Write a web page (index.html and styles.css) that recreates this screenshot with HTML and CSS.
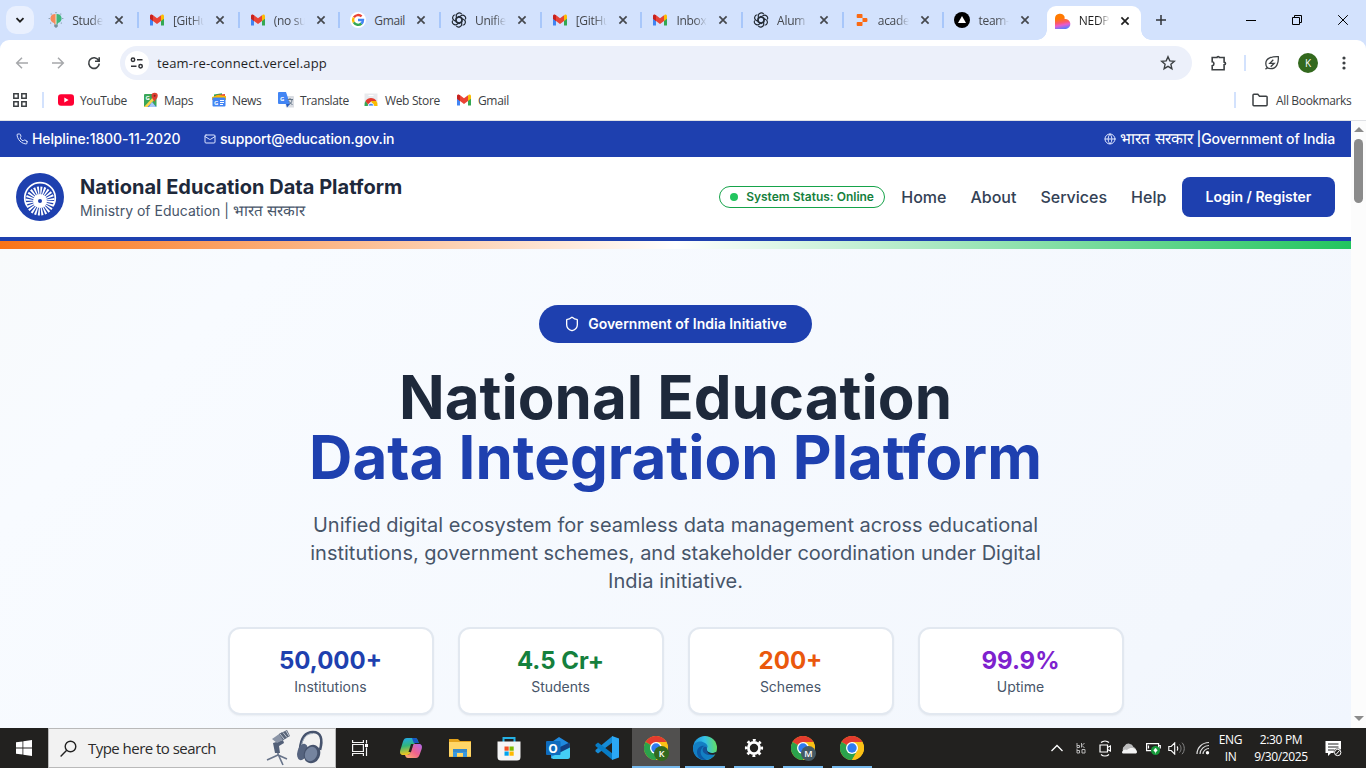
FILE: index.html
```html
<!DOCTYPE html>
<html lang="en">
<head>
<meta charset="utf-8">
<title>NEDP</title>
<link rel="stylesheet" href="styles.css">
</head>
<body>
<svg class="defs" width="0" height="0" aria-hidden="true">
  <defs>
    <linearGradient id="heartg" x1="0.3" y1="0" x2="0.5" y2="1"><stop offset="0.3" stop-color="#ff7a00"/><stop offset="0.58" stop-color="#fb5a6c"/><stop offset="0.75" stop-color="#e75bd0"/><stop offset="1" stop-color="#5b7cff"/></linearGradient>
    <linearGradient id="edgeg" x1="0" y1="0.3" x2="1" y2="0.2"><stop offset="0" stop-color="#1b8fd8"/><stop offset="0.5" stop-color="#35c1e8"/><stop offset="1" stop-color="#66df5b"/></linearGradient>
    <linearGradient id="cop1" x1="0" y1="0" x2="0.2" y2="1"><stop offset="0" stop-color="#23a8f2"/><stop offset="0.5" stop-color="#31b67a"/><stop offset="1" stop-color="#f4c51c"/></linearGradient>
    <linearGradient id="cop2" x1="1" y1="0" x2="0" y2="1"><stop offset="0" stop-color="#b06bf0"/><stop offset="0.5" stop-color="#f0628c"/><stop offset="1" stop-color="#ffb36b"/></linearGradient>
  </defs>
  <symbol id="x" viewBox="0 0 10 10"><path d="M1.400 1.400l7.200 7.200M8.600 1.400L1.400 8.600" fill="none" stroke="currentColor" stroke-width="1.700"/></symbol>
  <symbol id="gm" viewBox="0 0 16 16"><path d="M1 4v9.500h3V7z" fill="#4285f4"/><path d="M15 4v9.500h-3V7z" fill="#34a853"/><path d="M12 4.500V9l3-2.300V4.200C15 2.300 13.200 2.200 12.200 3z" fill="#fbbc04"/><path d="M1 4.200C1 2.300 2.800 2.200 3.800 3L8 6.200 12 3.200V9l-4 3.100L4 9v.1L1 6.800z" fill="#ea4335"/><path d="M1 4.200C1 2.500 2.800 2.200 4 3.200V9L1 6.800z" fill="#c5221f"/></symbol>
  <symbol id="gpt" viewBox="0 0 16 16"><g fill="none" stroke="#202831" stroke-width="1.150"><path id="petal" d="M5.300 9.500V4.200a3 3 0 0 1 5.500-1.900M8 4.300l-2.700 1.600"/><use href="#petal" transform="rotate(60 8 8)"/><use href="#petal" transform="rotate(120 8 8)"/><use href="#petal" transform="rotate(180 8 8)"/><use href="#petal" transform="rotate(240 8 8)"/><use href="#petal" transform="rotate(300 8 8)"/></g></symbol>
  <symbol id="goog" viewBox="0 0 16 16"><circle cx="8" cy="8" r="8" fill="#fff"/><g fill="none" stroke-width="2.400"><path d="M3.900 5.400a5 5 0 0 1 7.700-1" stroke="#ea4335"/><path d="M3.700 10.400a5 5 0 0 1 0-4.800" stroke="#fbbc05"/><path d="M11.500 11.500a5 5 0 0 1-7.700-1.100" stroke="#34a853"/><path d="M8 8h5a5 5 0 0 1-1.600 3.700" stroke="#4285f4"/></g></symbol>
  <symbol id="chrome" viewBox="0 0 24 24"><circle cx="12" cy="12" r="12" fill="#fbc116"/><path d="M12 12L1.600 6a12 12 0 0 1 20.800 0z" fill="#e33b2e"/><path d="M12 12L1.600 6A12 12 0 0 0 12 24l5.200-9z" fill="#2ba24c"/><path d="M12 6h10.400a12 12 0 0 1-10.400 18l5.200-9z" fill="#fbc116"/><circle cx="12" cy="12" r="6" fill="#fff"/><circle cx="12" cy="12" r="4.700" fill="#2f7cf0"/></symbol>
</svg>

<div class="tabstrip">
  <div class="tabsearch"><svg width="10" height="10" viewBox="0 0 10 10"><path d="M1.500 3.200L5 6.700l3.500-3.500" fill="none" stroke="#1f1f1f" stroke-width="1.800"/></svg></div>
  <div class="tab"><svg class="fav" viewBox="0 0 16 16"><path d="M8 2a4.600 4.600 0 0 0-2 9l.5 1.500H8z" fill="#f58a5b"/><path d="M8 2a4.600 4.600 0 0 1 2 9l-.5 1.500H8z" fill="#3eb67d"/><path d="M6.200 12.500h3.600v2L8 16l-1.800-1.500z" fill="#78909c"/><path d="M8 2v10" stroke="#efe6d4"/><g fill="#64808e"><circle cx="8" cy=".7" r=".6"/><circle cx="3.200" cy="2" r=".6"/><circle cx="12.800" cy="2" r=".6"/><circle cx="1.200" cy="6.500" r=".6"/><circle cx="14.800" cy="6.500" r=".6"/><circle cx="2.700" cy="11" r=".6"/><circle cx="13.300" cy="11" r=".6"/></g></svg><span>Stude</span><svg class="close"><use href="#x"/></svg></div>
  <div class="tab"><svg class="fav"><use href="#gm"/></svg><span>[GitHu</span><svg class="close"><use href="#x"/></svg></div>
  <div class="tab"><svg class="fav"><use href="#gm"/></svg><span>(no su</span><svg class="close"><use href="#x"/></svg></div>
  <div class="tab"><svg class="fav"><use href="#goog"/></svg><span class="whole">Gmail</span><svg class="close"><use href="#x"/></svg></div>
  <div class="tab"><svg class="fav"><use href="#gpt"/></svg><span>Unifie</span><svg class="close"><use href="#x"/></svg></div>
  <div class="tab"><svg class="fav"><use href="#gm"/></svg><span>[GitHu</span><svg class="close"><use href="#x"/></svg></div>
  <div class="tab"><svg class="fav"><use href="#gm"/></svg><span>Inbox</span><svg class="close"><use href="#x"/></svg></div>
  <div class="tab"><svg class="fav"><use href="#gpt"/></svg><span>Alum</span><svg class="close"><use href="#x"/></svg></div>
  <div class="tab"><svg class="fav" viewBox="0 0 16 16"><path d="M3.500 2h4c.6 0 1 .4 1 1v3h-5C3 6 2.700 5.600 2.700 5.200V3c0-.6.4-1 .8-1zM8.500 6.100h4c.5 0 .9.400.9.900v2c0 .5-.4.900-.9.900h-4zM3.500 9.900h5v3c0 .6-.4 1-1 1h-4c-.5 0-.8-.4-.8-.9v-2.200c0-.5.300-.9.800-.9z" fill="#fb6a13"/></svg><span>acade</span><svg class="close"><use href="#x"/></svg></div>
  <div class="tab last"><svg class="fav" viewBox="0 0 16 16"><circle cx="8" cy="8" r="8" fill="#000"/><path d="M8 4l4 7H4z" fill="#fff"/></svg><span>team-</span><svg class="close"><use href="#x"/></svg></div>
  <div class="tab active"><svg class="fav" viewBox="0 0 16 16"><path d="M0 5a5 5 0 0 1 9.600-1.200V6A5 5 0 1 1 11 16H0z" fill="url(#heartg)"/></svg><span>NEDP</span><svg class="close"><use href="#x"/></svg></div>
  <svg class="plus" width="12" height="12" viewBox="0 0 12 12"><path d="M6 1v10M1 6h10" stroke="#303338" stroke-width="1.500"/></svg>
  <div class="winctl">
    <svg width="10" height="10" viewBox="0 0 10 10"><path d="M0 5.500h10" stroke="#000"/></svg>
    <svg width="10" height="10" viewBox="0 0 10 10"><path d="M.5 2.500h7v7h-7zM2.500 2.500v-2h7v7h-2" fill="none" stroke="#000"/></svg>
    <svg width="10" height="10" viewBox="0 0 10 10"><path d="M.2.200l9.600 9.600M9.800.2L.2 9.800" stroke="#000"/></svg>
  </div>
</div>

<div class="chromebody">
  <div class="toolbar">
    <svg class="ti" width="16" height="16" viewBox="0 0 16 16"><path d="M14 8H3M8 2.700L2.700 8 8 13.300" fill="none" stroke="#a6a8ab" stroke-width="1.500"/></svg>
    <svg class="ti" width="16" height="16" viewBox="0 0 16 16"><path d="M2 8h11M8 2.700L13.300 8 8 13.300" fill="none" stroke="#a6a8ab" stroke-width="1.500"/></svg>
    <svg class="ti" width="16" height="16" viewBox="0 0 16 16"><path d="M12.600 5.400A5.300 5.300 0 1 0 13.300 8.700M13.200 2.200v4.100H9" fill="none" stroke="#3c4043" stroke-width="1.600"/></svg>
    <div class="omnibox">
      <div class="site"><svg width="14" height="12" viewBox="0 0 14 12"><g fill="none" stroke="#303236" stroke-width="1.500"><circle cx="3" cy="2.800" r="1.700"/><path d="M7 2.800h5.500M1 9.200h5.500"/><circle cx="10.600" cy="9.200" r="1.700"/></g></svg></div>
      <span class="url">team-re-connect.vercel.app</span>
      <svg width="16" height="16" viewBox="0 0 16 16"><path d="M8 1.800l1.800 4.100 4.500.4-3.400 3 1 4.400L8 11.400l-3.900 2.300 1-4.400-3.400-3 4.500-.4z" fill="none" stroke="#3c4043" stroke-width="1.400"/></svg>
    </div>
    <svg class="ext" width="18" height="18" viewBox="0 0 18 18"><path d="M2.200 3.500h4.800c.1-1.400 2.200-1.400 2.300 0h4.800v4.600c1.900.2 1.900 2.400 0 2.600v5H2.200v-4c2.300-.3 2.300-3.700 0-4z" fill="none" stroke="#3c4043" stroke-width="1.600"/></svg>
    <i class="vsep"></i>
    <svg class="leaf" width="16" height="16" viewBox="0 0 16 16"><path d="M14.300 1.700C8 1.500 1.800 3 1.800 8.500c0 3 2 5.200 5 5.200 5.700 0 8-5.700 7.500-12zM3.800 12l-2.300 2.300M9.300 4.800L5.800 8.300h4.400L6.700 11.800" fill="none" stroke="#3c4043" stroke-width="1.300"/></svg>
    <span class="avatar">K</span>
    <svg class="dots" width="4" height="14" viewBox="0 0 4 14"><g fill="#3c4043"><circle cx="2" cy="2" r="1.600"/><circle cx="2" cy="7" r="1.600"/><circle cx="2" cy="12" r="1.600"/></g></svg>
  </div>
  <div class="bookmarks">
    <svg class="apps" width="14" height="14" viewBox="0 0 14 14"><path d="M.8.800h4.400v4.400H.8zM8.800.8h4.400v4.400H8.800zM.8 8.800h4.400v4.400H.8zM8.800 8.800h4.400v4.400H8.800z" fill="none" stroke="#3c4043" stroke-width="1.500"/></svg>
    <i class="vsep bsep"></i>
    <div class="bm yt"><svg width="16" height="16" viewBox="0 0 16 16"><rect y="2.300" width="16" height="11.500" rx="3" fill="#f03"/><path d="M6.300 5.500v5l4.300-2.500z" fill="#fff"/></svg><span>YouTube</span></div>
    <div class="bm maps"><svg width="16" height="16" viewBox="0 0 16 16"><rect x="1" y="2" width="12.500" height="13" rx="1" fill="#3aa757"/><path d="M4 15l5-5 4.500 5z" fill="#4285f4"/><path d="M1 15L12 3l2 2L4.500 15z" fill="#fbd34b"/><path d="M6 15h7l-4-5z" fill="#aac8f7"/><text x="2.500" y="8" class="tiny">G</text><path d="M11.500 10C10.700 7.500 8.500 6.500 8.500 3.800a3 3 0 0 1 6.300 0c0 2.700-2.500 3.700-3.300 6.200z" fill="#de4032"/><circle cx="11.600" cy="3.700" r="1" fill="#7b231e"/></svg><span>Maps</span></div>
    <div class="bm news"><svg width="16" height="16" viewBox="0 0 16 16"><path d="M3 2.500l8-1.200V6H3z" fill="#34a853"/><path d="M5 3l9-1v4H5z" fill="#ea4335"/><path d="M1 5l6-2 8 1v4H1z" fill="#fbbc04"/><rect x="1.500" y="5.500" width="13" height="9" rx="1" fill="#4285f4"/><text x="3" y="12.500" class="tiny">G</text><path d="M9 8.500h4M9 10.500h4M9 12.500h3" stroke="#fff"/></svg><span>News</span></div>
    <div class="bm trans"><svg width="16" height="16" viewBox="0 0 16 16"><path d="M6 4h9a1 1 0 0 1 1 1v10.500H8z" fill="#d9dce2"/><path d="M1 0h7l4 12H1a1 1 0 0 1-1-1V1a1 1 0 0 1 1-1z" fill="#4285f4"/><path d="M8 12h4l-3 3.500z" fill="#255bbf"/><text x="2" y="8.500" class="tiny">G</text><path d="M9.500 7.500H15M12 6v1.500M14 7.500c0 3-2 4.500-3 5M10.500 9l4 4" fill="none" stroke="#667789"/></svg><span>Translate</span></div>
    <div class="bm store"><svg width="16" height="16" viewBox="0 0 16 16"><path d="M1.500 1.500h13v12.500h-13z" fill="#e8eaed"/><path d="M5.500 3h5v1h-5z" fill="#fff"/><path d="M1.500 14a6.500 6.500 0 0 1 1.300-5.200L6 13.900z" fill="#34a853"/><path d="M14.500 14a6.500 6.500 0 0 0-1.300-5.200L8 9l2.500 5z" fill="#fbbc04"/><path d="M2.500 9a6.500 6.500 0 0 1 11 0H8.500L5 12.500z" fill="#e33b2e"/><path d="M5.200 14a2.800 2.800 0 0 1 5.600 0z" fill="#4285f4" stroke="#fff" stroke-width=".8"/></svg><span>Web Store</span></div>
    <div class="bm mail"><svg width="16" height="16"><use href="#gm"/></svg><span>Gmail</span></div>
    <i class="vsep allsep"></i>
    <div class="bm all"><svg width="16" height="16" viewBox="0 0 16 16"><path d="M1 12.800V3.200c0-.6.300-.9.900-.9h3.900l1.700 1.900h6.700c.6 0 .9.300.9.900v7.700c0 .600-.3.900-.9.900H1.900c-.6 0-.9-.3-.9-.9z" fill="none" stroke="#3c4043" stroke-width="1.500"/></svg><span>All Bookmarks</span></div>
  </div>
</div>

<div class="viewport">
  <main class="page">
    <div class="topbar">
      <svg class="ic12" viewBox="0 0 24 24"><path d="M22 16.900v3a2 2 0 0 1-2.200 2 19.800 19.800 0 0 1-8.600-3.100 19.500 19.500 0 0 1-6-6A19.800 19.800 0 0 1 2.100 4.200 2 2 0 0 1 4.100 2h3a2 2 0 0 1 2 1.700c.1 1 .4 1.900.7 2.800a2 2 0 0 1-.5 2.100L8.100 9.900a16 16 0 0 0 6 6l1.300-1.300a2 2 0 0 1 2.100-.4c.9.300 1.800.6 2.800.7a2 2 0 0 1 1.700 2z"/></svg><span>Helpline:1800-11-2020</span>
      <svg class="ic12 mailic" viewBox="0 0 24 24"><rect x="2" y="4" width="20" height="16" rx="2"/><path d="M22 7l-9 5.700a2 2 0 0 1-2 0L2 7"/></svg><span>support@education.gov.in</span>
      <svg class="ic12 globe" viewBox="0 0 24 24"><circle cx="12" cy="12" r="10"/><path d="M12 2a14.500 14.500 0 0 0 0 20 14.500 14.500 0 0 0 0-20M2 12h20"/></svg><span><span class="hin1">भारत सरकार</span> |Government of India</span>
    </div>
    <header class="header">
      <svg width="48" height="48" viewBox="0 0 48 48"><circle cx="24" cy="24" r="24" fill="#1e40af"/><path d="M11 33a15.300 15.300 0 1 1 26 0" fill="none" stroke="#fff" stroke-width="1.700"/><circle cx="24" cy="28" r="10.500" fill="none" stroke="#fff" stroke-width="8" stroke-dasharray="1.600 1.149"/><circle cx="24" cy="28" r="7" fill="#fff"/><circle cx="24" cy="28" r="2" fill="#1e40af"/></svg>
      <div class="brand"><h2>National Education Data Platform</h2><p>Ministry of Education | <span class="hin2">भारत सरकार</span></p></div>
      <div class="status"><i></i>System Status: Online</div>
      <nav><a>Home</a><a>About</a><a>Services</a><a>Help</a></nav>
      <button class="login">Login / Register</button>
    </header>
    <div class="tricolor"></div>
    <section class="hero">
      <div class="badge"><svg width="16" height="16" viewBox="0 0 24 24"><path d="M20 13c0 5-3.500 7.500-7.700 9a1 1 0 0 1-.6 0C7.500 20.500 4 18 4 13V6a1 1 0 0 1 1-1c2 0 4.500-1.200 6.200-2.700a1.200 1.200 0 0 1 1.600 0C14.500 3.800 17 5 19 5a1 1 0 0 1 1 1z"/></svg><span>Government of India Initiative</span></div>
      <h1>National Education<br><span>Data Integration Platform</span></h1>
      <p class="lead">Unified digital ecosystem for seamless data management across educational institutions, government schemes, and stakeholder coordination under Digital India initiative.</p>
      <div class="stats">
        <div class="stat"><b class="blue">50,000+</b><span>Institutions</span></div>
        <div class="stat"><b class="green">4.5 Cr+</b><span>Students</span></div>
        <div class="stat"><b class="orange">200+</b><span>Schemes</span></div>
        <div class="stat"><b class="purple">99.9%</b><span>Uptime</span></div>
      </div>
    </section>
  </main>
  <div class="scroll"><i class="up"></i><i class="thumb"></i><i class="down"></i></div>
</div>

<div class="taskbar">
  <div class="start"><svg width="16" height="16" viewBox="0 0 16 16"><path d="M0 2.300L6.500 1.400v6.200H0zM7.300 1.300L16 0v7.600H7.300zM0 8.400h6.500v6.200L0 13.700zM7.300 8.400H16V16l-8.700-1.300z" fill="#fff"/></svg></div>
  <div class="search"><svg width="17" height="17" viewBox="0 0 17 17"><circle cx="10.500" cy="6.500" r="5.300" fill="none" stroke="#222" stroke-width="1.400"/><path d="M6.700 10.300L.6 16.400" stroke="#222" stroke-width="1.400"/></svg><span>Type here to search</span>
    <svg class="art" width="58" height="38" viewBox="0 0 58 38"><path d="M12 12v14M12 26L1 31M12 26l9 4M12 25l5 11" stroke="#68748a" stroke-width="1.600" fill="none"/><path d="M7 14l10-3 1 3-5 3 1 7H9z" fill="#536078"/><path d="M6 10l10-7 5 6-10 5z" fill="#8b95a7"/><path d="M13 5l8-4 3 6-7 4z" fill="#5b6679"/><path d="M14 5l4 5M17 3.500l4 5M20 2l3 5" stroke="#c4cbd5" stroke-width="1"/><path d="M34 20C35 9 39 3 47 3c8 0 10 7 7 18" fill="none" stroke="#46536d" stroke-width="2.600"/><path d="M35 18C37 8 41 4.500 47 4.500" fill="none" stroke="#9ba8b8" stroke-width="1"/><ellipse cx="36.500" cy="23" rx="5" ry="8.500" transform="rotate(18 36.500 23)" fill="#56647f"/><ellipse cx="46" cy="25" rx="8" ry="9.500" transform="rotate(25 46 25)" fill="#46536d"/><ellipse cx="45" cy="25" rx="6" ry="7.500" transform="rotate(25 45 25)" fill="#75849f"/></svg>
  </div>
  <div class="cell tv"><svg width="17" height="16" viewBox="0 0 17 16"><path d="M.6 0v2.500h10.800V0M.6 16v-2.500h10.800V16M.6 4.500h10.800v7H.6zM14.500 0v3.500M14.500 7.500V16" fill="none" stroke="#f3f3f3" stroke-width="1.200"/><rect x="13" y="4" width="3" height="3" fill="#fff"/></svg></div>
  <div class="cell"><svg width="24" height="24" viewBox="0 0 24 24"><path d="M8 2h8c2 0 2.500 1.500 3 3l.8 2h-4L12 15c-1 3-2 4-4 4H4c-3 0-3.500-2.500-2.500-5.500l2.500-8C4.800 3 6 2 8 2z" fill="url(#cop1)"/><path d="M13 2h3c2 0 2.500 1.500 3 3l.8 2h-5z" fill="#1656c5"/><path d="M17 22H9c-2 0-2.600-2-3-3h2c2 0 3-1 4-4l2.500-7H20c3 0 3.500 2.500 2.500 5.500l-2 5.500c-.8 2-1.700 3-3.500 3z" fill="url(#cop2)"/><path d="M9.500 16l2.500-8h2.500L12 16z" fill="#242321"/></svg></div>
  <div class="cell"><svg width="24" height="24" viewBox="0 0 24 24"><path d="M1 3h9l2 2h11v16H1z" fill="#e3a21a"/><path d="M1 6h22v14.500H1z" fill="#ffd667"/><path d="M5 13h14v8h-4v-4H9v4H5z" fill="#3899df"/><path d="M5 13h14v3H5z" fill="#3588c9"/></svg></div>
  <div class="cell"><svg width="24" height="25" viewBox="0 0 24 25"><path d="M6.500 6V2h11v4" fill="none" stroke="#25b1e4" stroke-width="2"/><path d="M.5 5.500h23V21a3.500 3.500 0 0 1-3.500 3.500H4A3.500 3.500 0 0 1 .5 21z" fill="#f5f5f5"/><path d="M7.500 10.500h4.200v4.200H7.500z" fill="#f25022"/><path d="M12.500 10.500h4.200v4.200h-4.200z" fill="#7fba00"/><path d="M7.500 15.500h4.200v4.200H7.500z" fill="#00a4ef"/><path d="M12.500 15.500h4.200v4.200h-4.200z" fill="#ffb900"/></svg></div>
  <div class="cell"><svg width="24" height="24" viewBox="0 0 24 24"><path d="M5 6.500L13 1l10.500 6.500V20a2.500 2.500 0 0 1-2.500 2.500H5z" fill="#1f8ae0"/><path d="M14 11l9.500-4.500v6L14 17z" fill="#123f82"/><path d="M24 11.500v9a2.500 2.500 0 0 1-2.500 2.500H7l-2-2z" fill="#44cdf4"/><rect y="5" width="14.500" height="14" rx="1" fill="#0f6cbd"/><text x="2.300" y="16.500" class="outlook">O</text></svg></div>
  <div class="cell"><svg width="24" height="24" viewBox="0 0 24 24"><path d="M17.500 6.500L3 17.500.5 15.500v-1.500L17.500 0z" fill="#168bd5"/><path d="M17.500 17.500L3 6.500.5 8.500V10l17 14z" fill="#087cc5"/><path d="M17 0l7 2.500v19L17 24z" fill="#2ba8f5"/></svg></div>
  <div class="cell sel"><svg width="24" height="24"><use href="#chrome"/></svg><em class="kb">K</em></div>
  <div class="cell run"><svg width="24" height="24" viewBox="0 0 24 24"><circle cx="12" cy="12" r="12" fill="url(#edgeg)"/><path d="M0 12C1 5 8 4 12 7c3 2 3 4 2 5-1 2 1 5 5 5 1.800 0 3-.4 4-1-2 5-6 8-11 8C5 24 0 19 0 12z" fill="#137fc4"/><path d="M9 12c-3 4-1 10 5 11.800C6 25 4 19 4 16c0-4 4-7 8-6-1.500 0-2.500 1-3 2z" fill="#0c59a4"/><path d="M14 12c-1 2 1 5 5 5 1.800 0 3-.4 4-1l-1 2c-7 3-14-1-12-6 1-1 3-2 4 0z" fill="#14539a"/><path d="M14 12.500c-1 2 1 4.500 5 4.500 1.800 0 3-.4 4.500-1.200v2.500c-7 1.500-10-1.300-9.500-5.800z" fill="#242321"/></svg></div>
  <div class="cell run"><svg width="20" height="20" viewBox="0 0 20 20"><circle cx="10" cy="10" r="5.600" fill="none" stroke="#fff" stroke-width="2.800"/><circle cx="10" cy="10" r="7.900" fill="none" stroke="#fff" stroke-width="2.400" stroke-dasharray="2.800 3.404" transform="rotate(-10 10 10)"/></svg></div>
  <div class="cell run"><svg width="24" height="24"><use href="#chrome"/></svg><em class="mb">M</em></div>
  <div class="cell run"><svg width="24" height="24"><use href="#chrome"/></svg></div>
  <div class="tray">
    <svg width="12" height="8" viewBox="0 0 12 8"><path d="M.5 7L6 1.500 11.500 7" fill="none" stroke="#fff" stroke-width="1.300"/></svg>
    <svg width="10" height="11" viewBox="0 0 10 11"><path d="M1 0v4.500h2.500V2.500H1M5.500 0v4.500M8.500 0L6 2.500 8.500 5M1 5.500v4.500h2.500V7.500H1M6 6.500h3v3.500H6z" fill="none" stroke="#b8b8b8"/></svg>
    <svg width="12" height="17" viewBox="0 0 12 17"><path d="M1 5h7.500v7H1zM8.500 7.500L11.500 6v5l-3-1.500M2 2.500c2.300-2 5.700-2 8 0M2 14.500c2.300 2 5.700 2 8 0" fill="none" stroke="#fff" stroke-width="1.200"/></svg>
    <svg width="17" height="11" viewBox="0 0 17 11"><path d="M4 10a4 4 0 0 1-.5-7A5 5 0 0 1 12.500 4a3.300 3.300 0 0 1 1 6z" fill="#bbb"/><path d="M1 9c1-3 4-3 5-2 4-4 10-1 10 2 0 1-1 1.500-2 1.500H3C1.500 10.500 1 10 1 9z" fill="#f4f4f4"/></svg>
    <svg width="16" height="14" viewBox="0 0 16 14"><path d="M1.600 2.600h12v7h-12zM14 4.500h1.300v3M3.500 4.500v3" fill="none" stroke="#fff" stroke-width="1.200"/><circle cx="10.500" cy="9.500" r="4.500" fill="#16993a"/><path d="M10.500 7l1.800 2.500-1.800 1.700-1.800-1.700zM10.500 11v1.500" fill="#fff" stroke="#fff" stroke-width=".5"/></svg>
    <svg width="17" height="13" viewBox="0 0 17 13"><path d="M.8 4.500h2.400l3.500-3.600v11.200L3.200 8.500H.8zM9 4.500c1 1 1 3 0 4" fill="none" stroke="#fff" stroke-width="1.100"/><path d="M11.500 2.500c2 2 2 6 0 8M14 .7c3 3 3 8.500 0 11.500" fill="none" stroke="#888"/></svg>
    <svg width="14" height="14" viewBox="0 0 14 14"><path d="M1 13C1 7 6 1.500 13 1.500M4 13c0-4.500 4-8.500 9-8.500M7 13c0-3 3-5.500 6-5.500" fill="none" stroke="#ddd" stroke-width="1.200"/><circle cx="11.500" cy="11.700" r="1.700" fill="#fff"/></svg>
    <div class="lang"><span>ENG</span><span>IN</span></div>
    <div class="clock"><span>2:30 PM</span><span>9/30/2025</span></div>
    <svg class="note" width="17" height="17" viewBox="0 0 17 17"><path d="M.5 1h15.500v12H6l-3 3v-3H.5z" fill="#fff"/><path d="M3 4h10.500M3 7h10.500M3 10h6" stroke="#222"/><circle cx="12.700" cy="12.500" r="4" fill="#242220"/><circle cx="12.700" cy="12.500" r="3.200" fill="none" stroke="#fff"/><path d="M11 14.500l3.500-4" stroke="#fff"/></svg>
  </div>
</div>
</body>
</html>
```
FILE: styles.css
```css
* { box-sizing: border-box; }
body { margin: 0; width: 1366px; height: 768px; overflow: hidden; display: flex; flex-direction: column; font-family: "Open Sans", "Noto Sans", sans-serif; background: #fff; }
svg { flex: none; display: block; }
.defs { position: absolute; }
p, h1, h2 { margin: 0; }

.tabstrip { flex: none; height: 40px; background: #d3e2fd; display: flex; align-items: center; padding-left: 6px; }
.tabsearch { width: 28px; height: 28px; border-radius: 10px; background: #e9f0fe; display: grid; place-items: center; margin-right: 3.300px; }
.tab { flex: none; width: 100.700px; height: 34px; display: flex; align-items: center; padding-left: 11px; position: relative; color: #45484d; font-size: 12px; letter-spacing: -.3px; }
.tab::after { content: ""; position: absolute; right: -1px; top: 9px; width: 2px; height: 16px; background: #a8c7fa; }
.tab.last::after, .tab.active::after { display: none; }
.fav { width: 16px; height: 16px; }
.tab span { width: 31px; margin-left: 8px; overflow: hidden; white-space: nowrap; -webkit-mask-image: linear-gradient(90deg, #000 60%, transparent); }
.tab .whole { overflow: visible; letter-spacing: -.4px; -webkit-mask-image: none; }
.close { width: 10px; height: 10px; margin-left: 11px; color: #45484d; }
.tab.active { width: 94px; height: 34px; align-self: flex-end; padding: 0 0 5px 8px; margin-left: 2.700px; border-radius: 9px 9px 0 0; background: #fff; color: #1f1f1f; }
.tab.active .close { color: #1f1f1f; margin-left: 10px; }
.tab.active::before, .tab.active::after { content: ""; display: block; position: absolute; left: auto; top: auto; bottom: 0; width: 10px; height: 10px; background: radial-gradient(circle at 0 0, transparent 9.500px, #fff 10px); }
.tab.active::before { left: -10px; }
.tab.active::after { right: -10px; background: radial-gradient(circle at 100% 0, transparent 9.500px, #fff 10px); }
.plus { margin-left: 14px; }
.winctl { margin-left: auto; display: flex; gap: 36px; padding-right: 18px; }

.chromebody { flex: none; height: 81px; background: linear-gradient(#d3e2fd 12px, #fff 12px); border-bottom: 1px solid #dfe1e5; }
.toolbar { height: 46px; background: #fff; border-radius: 9px 9px 0 0; display: flex; align-items: center; padding-left: 14px; }
.ti { margin-right: 20px; }
.ti:nth-child(3) { margin-right: 18px; }
.omnibox { width: 1072px; height: 34px; border-radius: 17px; background: #ecf0fa; display: flex; align-items: center; padding: 0 16px 0 5px; }
.site { width: 24px; height: 24px; border-radius: 12px; background: #fff; display: grid; place-items: center; }
.url { flex: 1; margin-left: 8px; font-size: 13px; color: #1f1f1f; letter-spacing: .14px; }
.ext { margin-left: 18px; margin-right: -1px; }
.vsep { flex: none; width: 2px; height: 16px; background: #d3e2fd; margin-left: 17px; }
.leaf { margin-left: 18px; }
.avatar { width: 20px; height: 20px; margin-left: 18px; border-radius: 50%; background: #33691e; color: #fff; font: 10px/20px "Open Sans", sans-serif; text-align: center; }
.dots { margin-left: 24px; }
.bookmarks { height: 28px; display: flex; align-items: center; font-size: 12px; color: #3c4043; letter-spacing: -.35px; }
.apps { margin-left: 13px; }
.bsep { margin-left: 15px; margin-right: 14px; }
.bm { display: flex; align-items: center; gap: 6px; white-space: nowrap; }
.bm.news, .bm.maps { gap: 5.500px; }
.yt { width: 84.500px; } .maps { width: 68px; } .news { width: 67.500px; } .trans { width: 85px; } .store { width: 93px; } .mail { width: 60px; }
.allsep { margin-left: auto; margin-right: 16px; }
.all { width: 114px; gap: 8px; }
.tiny { font: bold 6px "Open Sans", sans-serif; letter-spacing: 0; fill: #fff; }

.viewport { flex: none; height: 607px; display: flex; overflow: hidden; }
.page { width: 1351px; font-family: Inter, sans-serif; overflow: hidden; display: flex; flex-direction: column; }
.topbar { flex: none; height: 36px; background: #1e40af; color: #fff; display: flex; align-items: center; padding: 0 16px; font-size: 14px; line-height: 20px; font-weight: 500; white-space: nowrap; letter-spacing: -.12px; }
.hin1 { font-size: 15.500px; line-height: 16px; font-weight: 400; letter-spacing: 0; }
.hin2 { font-size: 15.200px; line-height: 16px; }
.ic12 { width: 12px; height: 12px; margin-right: 4px; fill: none; stroke: #dce4ff; stroke-width: 2; stroke-linecap: round; stroke-linejoin: round; }
.mailic { margin-left: 23.500px; }
.globe { margin-left: auto; }
.header { flex: none; height: 84px; background: #fff; border-bottom: 4px solid #1e40af; display: flex; align-items: center; padding: 0 16px; }
.brand { margin-left: 16px; margin-right: auto; white-space: nowrap; }
.brand h2 { font-size: 20px; line-height: 28px; font-weight: 700; color: #1e293b; letter-spacing: .01px; }
.brand p { font-size: 14px; line-height: 20px; color: #475569; }
.status { height: 22px; border: 1px solid #16a34a; border-radius: 11px; padding: 0 10px 1px; font-size: 12px; font-weight: 600; color: #15803d; display: flex; align-items: center; white-space: nowrap; }
.status i { width: 8px; height: 8px; border-radius: 50%; background: #22c55e; margin-right: 8px; }
nav { display: flex; gap: 24px; margin: 0 15.700px 0 16.300px; font-size: 16px; font-weight: 500; color: #334155; }
.login { width: 153px; height: 40px; border: 0; border-radius: 8px; background: #1e40af; color: #fff; font: 600 14px/20px Inter, sans-serif; padding: 0; }
.tricolor { flex: none; height: 8px; background: linear-gradient(90deg, #f97316, #fff 50%, #22c55e); }
.hero { flex: 1; background: linear-gradient(135deg, #f8fafc 0%, #f8fbff 15%, #f3f7fd 85%, #f1f6fe 100%); padding-top: 56px; display: flex; flex-direction: column; align-items: center; }
.badge { width: 273px; height: 38px; border-radius: 19px; background: #1e40af; color: #fff; font-size: 14px; font-weight: 600; display: flex; align-items: center; justify-content: center; gap: 8px; white-space: nowrap; }
.badge span { margin-top: -2px; }
.badge svg { fill: none; stroke: #fff; stroke-width: 2; }
h1 { margin-top: 24px; font-size: 60px; line-height: 60px; font-weight: 700; color: #1e293b; text-align: center; white-space: nowrap; }
h1 span { color: #1e40af; }
.lead { width: 768px; margin-top: 24px; text-align: center; font-size: 20px; line-height: 28px; color: #475569; }
.stats { margin-top: 32px; width: 896px; display: grid; grid-template-columns: repeat(4, 1fr); gap: 24px; }
.stat { height: 88px; background: #fff; border: 2px solid #e2e8f0; border-radius: 12px; padding: 16px; text-align: center; display: flex; flex-direction: column; box-shadow: 0 1px 2px rgba(0,0,0,.05); }
.stat b { font-size: 24px; line-height: 32px; font-weight: 700; }
.stat span { font-size: 14px; line-height: 20px; color: #475569; }
.blue { color: #1e40af; } .green { color: #15803d; } .orange { color: #ea580c; } .purple { color: #7e22ce; }
.scroll { width: 15px; background: #fcfcfc; display: flex; flex-direction: column; align-items: center; }
.up, .down { width: 0; height: 0; border: 5px solid transparent; border-top: 0; border-bottom: 5px solid #8b8b8b; margin-top: 6px; }
.thumb { width: 9px; height: 64px; border-radius: 5px; background: #8b8b8b; margin-top: 7px; }
.down { border-bottom: 0; border-top: 5px solid #8b8b8b; margin-top: auto; margin-bottom: 7px; }

.taskbar { flex: none; height: 40px; background: #22211f; display: flex; color: #fff; }
.start { width: 48px; display: grid; place-items: center; }
.search { width: 288px; background: #f2f2f2; border: 1px solid #b9b9b9; display: flex; align-items: center; padding-left: 11px; font-size: 15px; color: #2b2b2b; white-space: nowrap; }
.search span { margin-left: 11px; letter-spacing: -.53px; width: 140px; }
.art { margin-left: 38px; }
.cell { width: 48px; margin-right: 1px; display: flex; align-items: center; justify-content: center; position: relative; }
.tv { margin-right: 3px; }
.sel { background: #51504f; }
.sel::after, .run::after { content: ""; position: absolute; bottom: 0; left: 4px; right: 4px; height: 2px; background: #76b9ed; }
.sel::after { left: 0; right: 0; }
.cell em { position: absolute; left: 22px; top: 18px; width: 15px; height: 15px; border-radius: 50%; font: 600 9px/15px "Open Sans", sans-serif; text-align: center; background: #33691e; }
.cell .mb { background: #455a64; }
.outlook { font: bold 12px "Open Sans", sans-serif; fill: #fff; }
.tray { margin-left: auto; display: flex; align-items: center; font-size: 12px; padding-right: 24px; white-space: nowrap; }
.tray svg { margin-right: 10px; }
.tray svg:nth-child(1) { margin-right: 13px; }
.tray svg:nth-child(2) { margin-right: 13px; }
.tray svg:nth-child(4) { margin-right: 7px; }
.tray svg:nth-child(5) { margin-right: 7px; }
.tray svg:nth-child(6) { margin-right: 11px; }
.tray svg:nth-child(7) { margin-right: 8px; }
.tray .note { margin-right: 0; }
.lang, .clock { display: flex; flex-direction: column; align-items: center; line-height: 17px; letter-spacing: -.35px; }
.lang { width: 25px; }
.clock { width: 54px; margin-left: 11px; margin-right: 17px; }
```
